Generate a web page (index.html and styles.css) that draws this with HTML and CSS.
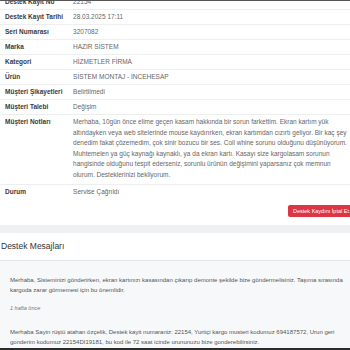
FILE: index.html
```html
<!DOCTYPE html>
<html lang="tr">
<head>
  <meta charset="UTF-8" />
  <meta name="viewport" content="width=device-width, initial-scale=1.0"/>
  <title>Destek Kaydı</title>
  <link rel="stylesheet" href="styles.css">
</head>
<body>

  <div class="top-line"></div>

  <div class="page">
    <section class="card details">
      <table class="info">
        <tr><th>Destek Kayıt No</th><td>22154</td></tr>
        <tr><th>Destek Kayıt Tarihi</th><td>28.03.2025 17:11</td></tr>
        <tr><th>Seri Numarası</th><td>3207082</td></tr>
        <tr><th>Marka</th><td>HAZIR SİSTEM</td></tr>
        <tr><th>Kategori</th><td>HİZMETLER FİRMA</td></tr>
        <tr><th>Ürün</th><td>SİSTEM MONTAJ - INCEHESAP</td></tr>
        <tr><th>Müşteri Şikayetleri</th><td>Belirtilmedi</td></tr>
        <tr><th>Müşteri Talebi</th><td>Değişim</td></tr>
        <tr>
          <th>Müşteri Notları</th>
          <td class="notes">Merhaba, 10gün önce elime geçen kasam hakkında bir sorun farkettim. Ekran kartım yük<br>
            altındayken veya web sitelerinde mouse kaydırırken, ekran kartımdan cızırtı geliyor. Bir kaç şey<br>
            denedim fakat çözemedim, çok sinir bozucu bir ses. Coil whine sorunu olduğunu düşünüyorum.<br>
            Muhtemelen ya güç kaynağı kaynaklı, ya da ekran kartı. Kasayı size kargolasam sorunun<br>
            hangisinde olduğunu tespit ederseniz, sorunlu ürünün değişimini yaparsanız çok memnun<br>
            olurum. Desteklerinizi bekliyorum.</td>
        </tr>
        <tr class="last"><th>Durum</th><td>Servise Çağrıldı</td></tr>
      </table>

      <div class="actions">
        <button class="btn-cancel">Destek Kaydını İptal Et</button>
      </div>
    </section>

    <section class="card messages">
      <h2 class="card-title">Destek Mesajları</h2>
      <div class="message-list">
        <div class="message">
          <p>Merhaba, Sisteminizi gönderirken, ekran kartınızı kasasından çıkarıp demonte şekilde bize göndermelisiniz. Taşıma sırasında<br>
            kargoda zarar görmemesi için bu önemlidir.</p>
          <span class="time">1 hafta önce</span>
        </div>
        <div class="message">
          <p>Merhaba Sayin rüştü atahan özçelik, Destek kayit numaraniz: 22154, Yurtiçi kargo musteri kodumuz 694187572, Urun geri<br>
            gonderim kodumuz 22154DI19181, bu kod ile 72 saat icinde urununuzu bize gonderebilirsiniz.</p>
        </div>
      </div>
    </section>
  </div>

  <div class="bottom-line"></div>

</body>
</html>
```

FILE: styles.css
```css
body {
  margin: 0;
  font-family: 'Liberation Sans', Arial, sans-serif;
  background-color: #eef0f2;
  color: #555;
  overflow: hidden;
  height: 350px;
}

.top-line {
  position: fixed;
  top: 0;
  left: 0;
  right: 0;
  height: 1px;
  background: #555;
}

.bottom-line {
  position: fixed;
  bottom: 0;
  left: 0;
  right: 0;
  height: 2px;
  background: #2a2a2a;
}

.page {
  width: 365px;
  margin-top: -5px;
}

.card {
  background: #ffffff;
}

.details {
  padding-bottom: 8px;
}

.info {
  width: 100%;
  border-collapse: collapse;
  font-size: 6.5px;
  line-height: 10px;
}

.info th,
.info td {
  text-align: left;
  vertical-align: top;
  padding: 2px 5px;
  border-bottom: 1px solid #eceef0;
}

.info th {
  width: 55px;
  font-weight: 700;
  color: #3a3a3a;
  white-space: nowrap;
}

.info td {
  color: #666;
}

.info .notes {
  line-height: 10.5px;
  padding-bottom: 4px;
}

.info .last th,
.info .last td {
  border-bottom: none;
}

.actions {
  display: flex;
  justify-content: flex-end;
  padding: 6px 0 0 288px;
}

.btn-cancel {
  flex: 1;
  text-align: left;
  background: #dc3545;
  color: #fff;
  border: none;
  border-radius: 2px;
  font-family: inherit;
  font-size: 5.5px;
  line-height: 8px;
  padding: 2px 5px;
  white-space: nowrap;
}

.messages {
  margin-top: 8px;
}

.card-title {
  margin: 0;
  padding: 8px 1px;
  font-size: 8.5px;
  line-height: 11px;
  font-weight: 400;
  color: #333;
  border-bottom: 1px solid #e3e5e7;
}

.message-list {
  background: #f7f8f9;
  padding: 8px 10px 0;
}

.message {
  padding: 6px 0 10px;
}

.message p {
  margin: 0;
  font-size: 6px;
  line-height: 10px;
  color: #555;
}

.time {
  display: block;
  margin-top: 10px;
  font-size: 5.5px;
  font-style: italic;
  color: #777;
}
```
